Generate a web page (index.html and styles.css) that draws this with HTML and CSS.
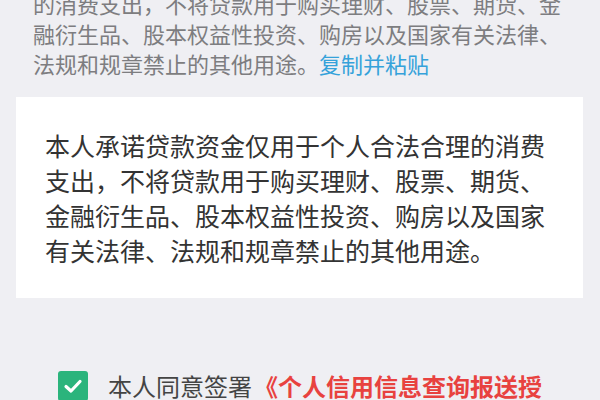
FILE: index.html
```html
<!DOCTYPE html>
<html lang="zh-CN">
<head>
<meta charset="utf-8">
<link rel="stylesheet" href="styles.css">
</head>
<body>
<div class="page">
  <p class="hint">的消费支出，不将贷款用于购买理财、股票、期货、金融衍生品、股本权益性投资、购房以及国家有关法律、法规和规章禁止的其他用途。<span class="copy">复制并粘贴</span></p>
  <div class="card">
    <p class="pledge">本人承诺贷款资金仅用于个人合法合理的消费支出，不将贷款用于购买理财、股票、期货、金融衍生品、股本权益性投资、购房以及国家有关法律、法规和规章禁止的其他用途。</p>
  </div>
  <div class="agree">
    <span class="check"><svg viewBox="0 0 30 30" width="30" height="30"><path d="M8 15.5 L13 20 L22 10.5" fill="none" stroke="#fff" stroke-width="3.2" stroke-linecap="round" stroke-linejoin="round"/></svg></span>
    <p class="agree-text">本人同意签署<span class="doc">《个人信用信息查询报送授权书》</span></p>
  </div>
</div>
</body>
</html>
```
FILE: styles.css
```css
html, body {
  margin: 0;
  padding: 0;
}
body {
  width: 600px;
  height: 400px;
  overflow: hidden;
  background: #efeff3;
  font-family: "Noto Sans CJK SC", "Noto Sans", sans-serif;
}
.page {
  display: flex;
  flex-direction: column;
  margin-top: -12.5px;
}
.hint {
  margin: 0;
  padding: 0 30px 0 33px;
  font-size: 22px;
  line-height: 30px;
  color: #7d7d80;
}
.copy {
  color: #35a2da;
}
.card {
  margin: 19.5px 17px 0 16px;
  background: #ffffff;
  padding: 30.5px 29px 30.5px 29px;
}
.pledge {
  margin: 0;
  font-size: 25px;
  line-height: 35px;
  color: #333333;
}
.agree {
  display: flex;
  align-items: flex-start;
  gap: 20px;
  margin: 73px 0 0 58px;
}
.check {
  flex: none;
  width: 30px;
  height: 30px;
  border-radius: 3px;
  background: #2bb47c;
  display: flex;
}
.agree-text {
  margin: 0;
  width: 445px;
  font-size: 24px;
  line-height: 30px;
  color: #444444;
}
.doc {
  color: #e8423f;
  font-weight: bold;
  margin-left: 2px;
}
```
